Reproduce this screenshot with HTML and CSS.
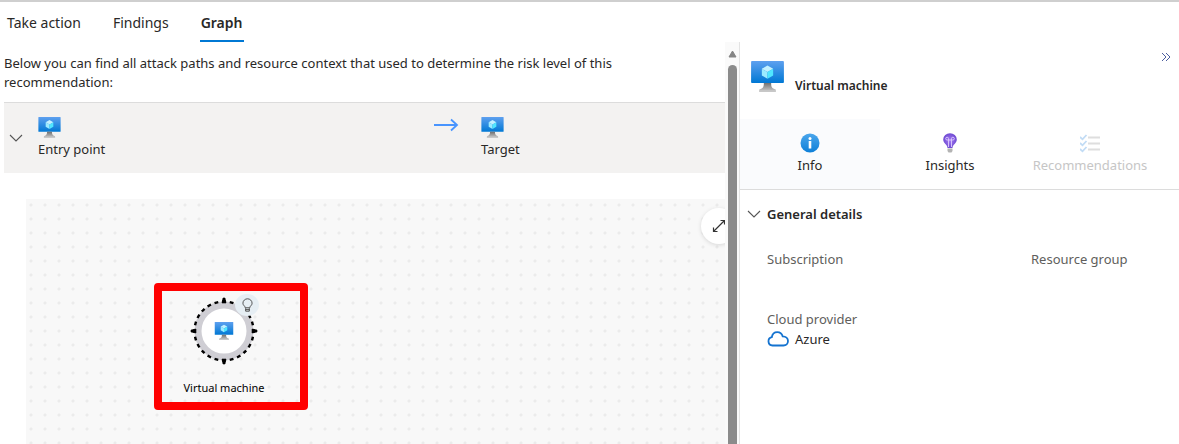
FILE: index.html
```html
<!DOCTYPE html>
<html lang="en">
<head>
<meta charset="utf-8">
<title>Attack path graph</title>
<link rel="stylesheet" href="styles.css">
</head>
<body>
<svg class="defs" aria-hidden="true">
  <defs>
    <linearGradient id="screen" x1="0" y1="0" x2="0" y2="1"><stop offset="0" stop-color="#5ea0ef"/><stop offset="1" stop-color="#0078d4"/></linearGradient>
    <linearGradient id="stand" x1="0" y1="0" x2="0" y2="1"><stop offset="0" stop-color="#707070"/><stop offset="1" stop-color="#d0d0d0"/></linearGradient>
    <linearGradient id="info" x1="0" y1="0" x2="0" y2="1"><stop offset="0" stop-color="#4ba6ec"/><stop offset="1" stop-color="#0d7fd8"/></linearGradient>
    <radialGradient id="bulb"><stop offset="0" stop-color="#a67af4"/><stop offset="1" stop-color="#6f4bd2"/></radialGradient>
  </defs>
  <symbol id="vm" viewBox="0 0 18 17">
    <rect width="18" height="12" rx=".5" fill="url(#screen)"/>
    <path d="M7 12h4c0 2 .3 3 2.500 3.600V17h-9v-1.400C6.700 15 7 14 7 12z" fill="url(#stand)"/>
    <path d="M4.500 16h9v1h-9z" fill="#c8c8c8"/>
    <path d="M9 2.500l3.100 1.800L9 6.100 5.900 4.300z" fill="#c3f1ff"/>
    <path d="M5.900 4.300L9 6.100v3.600L5.900 7.900z" fill="#9cebff"/>
    <path d="M12.100 4.300v3.600L9 9.700V6.100z" fill="#50e6ff"/>
  </symbol>
  <symbol id="chevron" viewBox="0 0 14 8"><path d="M1 1l6 6 6-6" fill="none" stroke="#555" stroke-width="1.100"/></symbol>
</svg>
<nav class="tabs">
  <button class="tab">Take action</button>
  <button class="tab">Findings</button>
  <button class="tab tab-active">Graph</button>
</nav>
<div class="layout">
  <main class="main">
    <p class="intro">Below you can find all attack paths and resource context that used to determine the risk level of this recommendation:</p>
    <section class="path">
      <button class="toggle" aria-label="Collapse path"><svg class="chevron"><use href="#chevron"/></svg></button>
      <div class="stop"><svg class="vm-small"><use href="#vm"/></svg><span>Entry point</span></div>
      <svg class="arrow" viewBox="0 0 25 14"><path d="M0 7h23M17 1.500l6 5.500-6 5.500" fill="none" stroke="#4894fe" stroke-width="1.800"/></svg>
      <div class="stop"><svg class="vm-small"><use href="#vm"/></svg><span>Target</span></div>
    </section>
    <section class="canvas">
      <button class="expand" aria-label="Full screen"><svg class="expand-icon" viewBox="0 0 14 14"><path d="M1.500 12.500l11-11M8.500 1.500h4v4M1.500 8.500v4h4" fill="none" stroke="#333" stroke-width="1.200"/></svg></button>
      <div class="node">
        <svg class="ring" viewBox="0 0 68 68">
          <circle cx="34" cy="34" r="26" fill="#fff" stroke="#cfced4" stroke-width="7"/>
          <circle cx="34" cy="34" r="29.500" fill="none" stroke="#000" stroke-width="2.400" pathLength="96" stroke-dasharray="2 2" stroke-dashoffset="1"/>
          <path d="M33 1h2l1 5h-4zM33 67h2l1-5h-4zM1 33v2l5 1v-4zM67 33v2l-5 1v-4z" stroke="#000" stroke-width=".6"/>
          <use href="#vm" x="24.500" y="25" width="19" height="18"/>
        </svg>
        <span class="badge"><svg class="badge-icon" viewBox="0 0 12 16"><path d="M3.500 10.500C3.500 8.500 1 8 1 5.500a5 4.800 0 0 1 10 0c0 2.500-2.500 3-2.500 5zM4 11v3.200h4V11M4 12.500h4" fill="none" stroke="#444"/></svg></span>
        <span class="node-label">Virtual machine</span>
      </div>
    </section>
  </main>
  <div class="scrollbar" aria-hidden="true">
    <svg class="scroll-up" viewBox="0 0 9 8"><path d="M4.500 1l3.500 6H1z" fill="#858585" stroke="#858585" stroke-linejoin="round"/></svg>
    <div class="thumb"></div>
  </div>
  <aside class="panel">
    <header class="panel-head">
      <svg class="vm-large"><use href="#vm"/></svg>
      <h2 class="panel-title">Virtual machine</h2>
      <button class="collapse" aria-label="Close panel"><svg class="collapse-icon" viewBox="0 0 10 10"><path d="M1 1l4 4-4 4M5 1l4 4-4 4" fill="none" stroke="#4c5fa0"/></svg></button>
    </header>
    <div class="panel-tabs">
      <button class="panel-tab panel-tab-active">
        <svg class="tab-icon" viewBox="0 0 20 20"><circle cx="10" cy="10" r="9.500" fill="url(#info)"/><circle cx="10" cy="5.400" r="1.500" fill="#fff"/><path d="M8.700 8h2.600v7.500H8.700z" fill="#fff"/></svg>
        Info
      </button>
      <button class="panel-tab">
        <svg class="tab-icon" viewBox="0 0 20 20"><path d="M7.500 15c0-3.500-4.300-4.500-4.300-8.500a6.800 6.300 0 0 1 13.600 0c0 4-4.300 5-4.300 8.500z" fill="url(#bulb)"/><path d="M8.500 14V7M11.500 14V7M8.500 7H7.200a1.400 1.400 0 1 1 1.300-1.400V7h3V5.600A1.400 1.400 0 1 1 12.800 7h-1.300" fill="none" stroke="#dccbff" stroke-width=".9"/><path d="M7.500 15.500h5V18L11.500 19.500h-3L7.500 18z" fill="#b3b3b3"/></svg>
        Insights
      </button>
      <button class="panel-tab" disabled>
        <svg class="tab-icon" viewBox="0 0 20 20"><path d="M0 4l2.500 2.300L6.500 2M0 10l2.500 2.300L6.500 8M0 16l2.500 2.300L6.500 14" fill="none" stroke="#c2dcf5" stroke-width="1.800"/><path d="M8 4.500h12M8 10.500h12M8 16.500h12" stroke="#dedede" stroke-width="2"/></svg>
        Recommendations
      </button>
    </div>
    <section class="details">
      <button class="details-toggle"><svg class="chevron"><use href="#chevron"/></svg>General details</button>
      <dl class="fields">
        <div><dt>Subscription</dt></div>
        <div><dt>Resource group</dt></div>
        <div><dt>Cloud provider</dt><dd class="provider"><svg class="cloud" viewBox="0 0 22 16"><path d="M5.500 14.500a4.200 4.200 0 0 1-.7-8.300C5.300 3.200 7.500 1.200 10.300 1.200c2.700 0 4.600 1.500 5.400 4.200 3.100 0 5.300 2 5.300 4.700 0 2.600-2 4.400-4.500 4.400z" fill="none" stroke="#1473d0" stroke-width="1.800"/></svg>Azure</dd></div>
      </dl>
    </section>
  </aside>
</div>
</body>
</html>
```

FILE: styles.css
```css
* { box-sizing: border-box; }
body {
  margin: 0;
  height: 100vh;
  overflow: hidden;
  display: flex;
  flex-direction: column;
  background: #fff;
  border-top: 2px solid #cfcfcf;
  color: #292827;
  font: 13px/20px "Noto Sans", "Open Sans", sans-serif;
}
button {
  padding: 0;
  border: 0;
  background: none;
  color: inherit;
  font: inherit;
}
svg { display: block; flex: none; }
.defs { position: absolute; width: 0; height: 0; }

.tabs { display: flex; gap: 30px; padding: 0 6px; font-size: 14px; }
.tab { height: 40px; padding: 3px 1px 0; border-bottom: 2px solid transparent; }
.tab-active { border-color: #0078d4; font-weight: 600; }

.layout { flex: 1; min-height: 0; display: flex; }
.main {
  flex: 1;
  min-width: 0;
  display: flex;
  flex-direction: column;
  padding: 12px 0 0 4px;
}
.intro { margin: 0; padding-right: 64px; line-height: 19px; }
.path {
  display: grid;
  grid-template-columns: 34px 396px 47px 1fr;
  height: 71px;
  margin-top: 10px;
  border-top: 1px solid #dcdcdc;
  background: #f3f2f1;
}
.toggle { display: flex; align-items: center; padding-left: 5px; }
.chevron { width: 14px; height: 8px; }
.stop { display: flex; flex-direction: column; gap: 1px; padding-top: 14px; }
.vm-small { width: 23px; height: 21px; }
.arrow { width: 25px; height: 14px; margin-top: 15px; }

.canvas {
  position: relative;
  flex: 1;
  margin: 26px 0 0 22px;
  overflow: hidden;
  background: #f8f8f8 radial-gradient(circle, #ebebeb 1px, transparent 2px) -2px -1px / 14px 14px;
}
.expand {
  position: absolute;
  top: 9px;
  right: -12px;
  width: 36px;
  height: 36px;
  border-radius: 50%;
  background: #fff;
  box-shadow: 0 1px 4px #0002;
}
.expand-icon { width: 14px; height: 14px; margin-left: 11px; }
.node {
  position: absolute;
  left: 128px;
  top: 84px;
  width: 154px;
  height: 127px;
  padding: 6px 14px 0 0;
  border: 8px solid #f00;
  border-radius: 4px;
  display: flex;
  flex-direction: column;
  align-items: center;
  justify-content: space-between;
  color: #000;
  font-size: 11px;
}
.ring { width: 68px; height: 68px; }
.badge {
  position: absolute;
  left: 73px;
  top: 3px;
  width: 24px;
  height: 22px;
  border-radius: 50%;
  background: #e6eef4;
  display: grid;
  place-items: center;
}
.badge-icon { width: 11px; height: 15px; }
.node-label { line-height: 20px; padding-bottom: 4px; white-space: nowrap; }

.scrollbar {
  width: 15px;
  display: flex;
  flex-direction: column;
  padding: 8px 3px 0;
  background: #fafafa;
  border-right: 1px solid #e3e3e3;
}
.scroll-up { width: 9px; height: 8px; }
.thumb { flex: 1; margin-top: 7px; border-radius: 5px 5px 0 0; background: #8b8b8b; width: 9px; }

.panel { width: 439px; min-width: 0; }
.panel-head { display: flex; height: 77px; padding: 19px 8px 0 11px; }
.vm-large { width: 33px; height: 31px; }
.panel-title { flex: 1; margin: 15px 0 0 11px; font-size: 12px; line-height: 20px; font-weight: 600; }
.collapse { width: 10px; height: 10px; margin-top: -9px; }
.collapse-icon { width: 10px; height: 10px; }
.panel-tabs { display: flex; border-bottom: 1px solid #dcdcdc; }
.panel-tab {
  width: 140px;
  height: 70px;
  display: flex;
  flex-direction: column;
  align-items: center;
  gap: 2px;
  padding-top: 14px;
}
.panel-tab-active { background: #fafbfd; }
.panel-tab:disabled { color: #c6c6c6; }
.tab-icon { width: 20px; height: 20px; }
.details { padding: 14px 7px 0; }
.details-toggle { display: flex; align-items: center; gap: 6px; font-weight: 600; }
.fields {
  display: grid;
  grid-template-columns: 264px 1fr;
  row-gap: 40px;
  margin: 25px 0 0 20px;
}
.fields dt { color: #605e5c; }
.fields dd { margin: 0; }
.provider { display: flex; align-items: center; gap: 6px; }
.cloud { width: 22px; height: 16px; }
```
